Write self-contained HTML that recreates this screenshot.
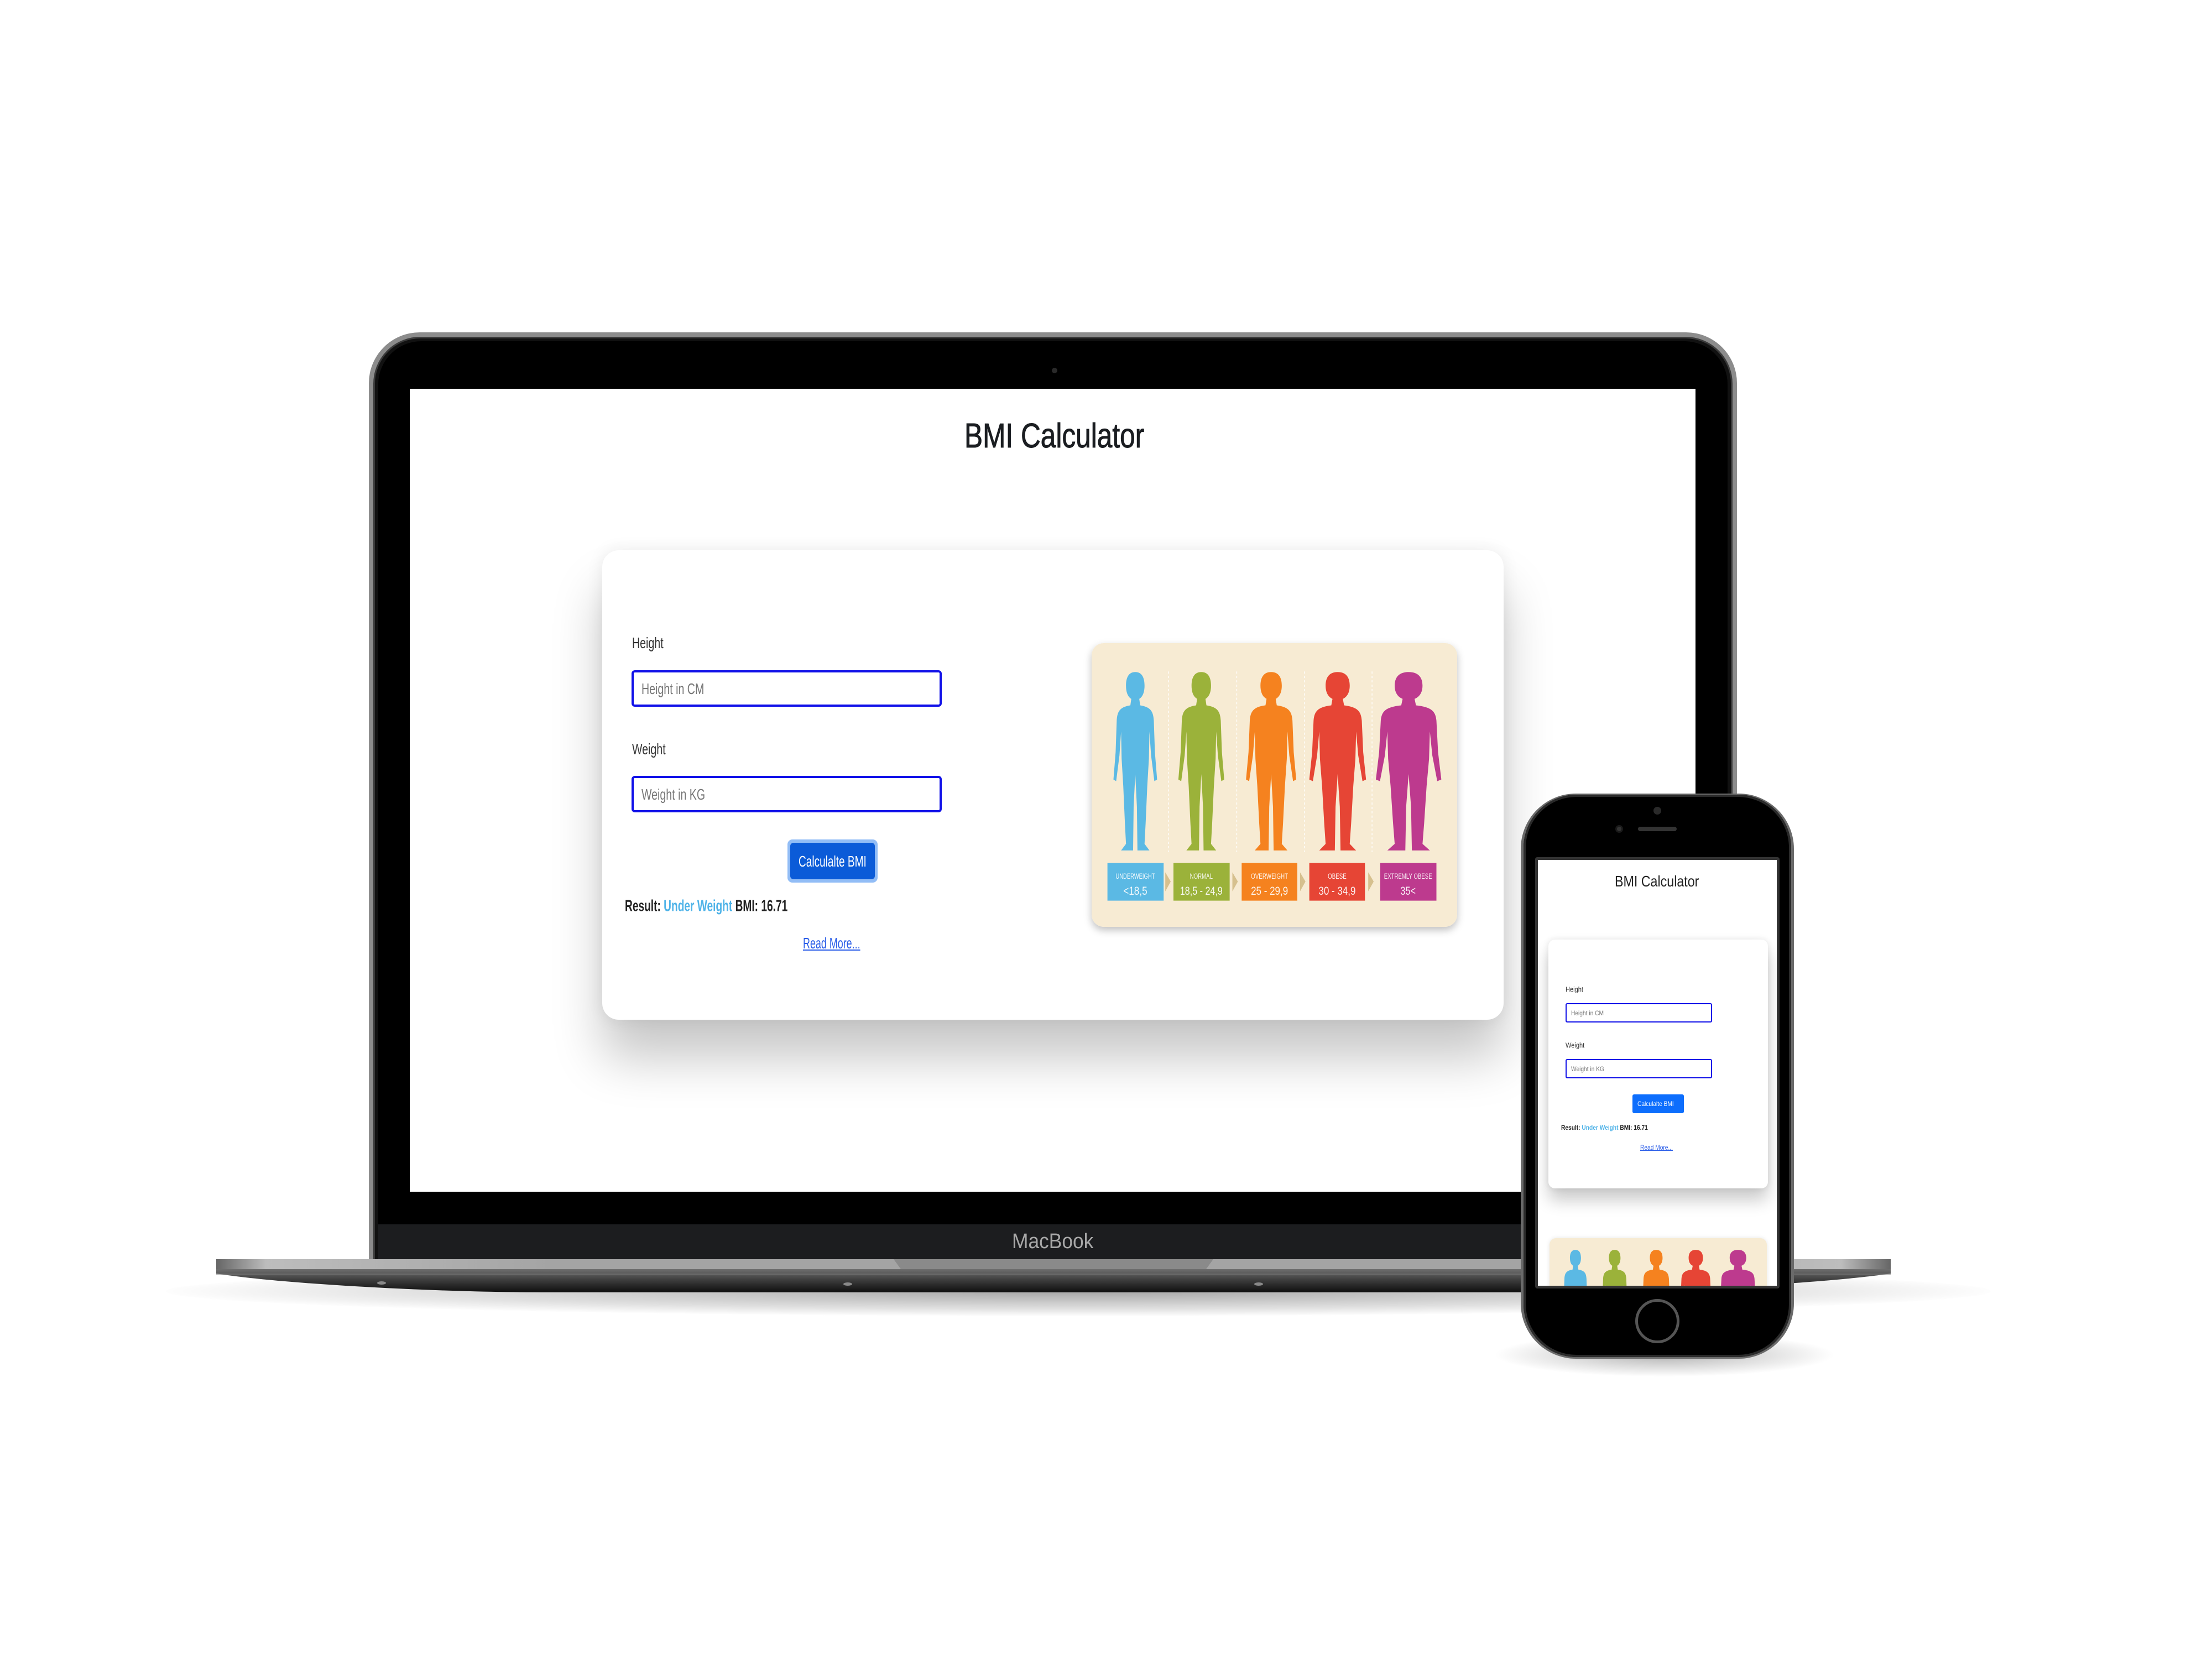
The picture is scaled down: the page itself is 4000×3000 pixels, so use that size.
<!DOCTYPE html>
<html><head><meta charset="utf-8"><style>
*{margin:0;padding:0;box-sizing:border-box}
body{width:4000px;height:3000px;background:#fff;position:relative;overflow:hidden;font-family:"Liberation Sans",sans-serif}
.a{position:absolute}
.t{position:absolute;white-space:nowrap;transform-origin:0 50%;line-height:1}
</style></head><body>

<div class="a" style="left:300px;top:2290px;width:3300px;height:90px;border-radius:50%;background:radial-gradient(ellipse at center,rgba(0,0,0,.35) 0%,rgba(0,0,0,.12) 50%,rgba(0,0,0,0) 72%)"></div>

<div class="a" style="left:667px;top:601px;width:2474px;height:1700px;border-radius:92px 92px 0 0;background:#8c8c8c"></div>
<div class="a" style="left:675px;top:609px;width:2458px;height:1700px;border-radius:85px 85px 0 0;background:#111;border:3px solid #3a3a3a"></div>
<div class="a" style="left:684px;top:617px;width:2440px;height:1680px;border-radius:78px 78px 0 0;background:#000"></div>
<div class="a" style="left:684px;top:2214px;width:2440px;height:64px;background:#1c1d1f"></div>
<div class="a" style="left:1902px;top:665px;width:10px;height:10px;border-radius:50%;background:#2a2a2a"></div>
<div class="t" style="left:1830px;top:2245px;font-size:38px;color:#a8a8a8;transform:translateY(-50%) scaleX(.93)">MacBook</div>

<div class="a" style="left:741px;top:703px;width:2325px;height:1452px;background:#fff;overflow:hidden">
  <div class="t" style="left:1003px;top:86px;font-size:62px;color:#1a1d21;-webkit-text-stroke:1px #1a1d21;transform:translateY(-50%) scaleX(.8)">BMI Calculator</div>
  <div class="a" style="left:348px;top:292px;width:1630px;height:849px;background:#fff;border-radius:30px;box-shadow:0 70px 90px rgba(0,0,0,.22),0 0 30px rgba(0,0,0,.08)"></div>
</div>

<div class="t" style="left:1143px;top:1163px;font-size:28px;color:#333;transform:translateY(-50%) scaleX(.7)">Height</div>
<div class="a" style="left:1142px;top:1212px;width:561px;height:66px;border:4px solid #1010e8;border-radius:6px"></div>
<div class="t" style="left:1160px;top:1246px;font-size:28px;color:#777;transform:translateY(-50%) scaleX(.7)">Height in CM</div>
<div class="t" style="left:1143px;top:1355px;font-size:28px;color:#333;transform:translateY(-50%) scaleX(.7)">Weight</div>
<div class="a" style="left:1142px;top:1403px;width:561px;height:66px;border:4px solid #1010e8;border-radius:6px"></div>
<div class="t" style="left:1160px;top:1437px;font-size:28px;color:#777;transform:translateY(-50%) scaleX(.7)">Weight in KG</div>
<div class="a" style="left:1424px;top:1518px;width:163px;height:78px;border-radius:9px;background:#92bdf6"></div>
<div class="a" style="left:1429px;top:1524px;width:153px;height:66px;border-radius:6px;background:#0b5bd8"></div>
<div class="t" style="left:1444px;top:1558px;font-size:28px;color:#fff;transform:translateY(-50%) scaleX(.68)">Calculalte BMI</div>
<div class="t" style="left:1130px;top:1639px;font-size:29px;font-weight:bold;color:#222;transform:translateY(-50%) scaleX(.66)">Result: <span style="color:#4fb3e8">Under Weight</span> BMI: 16.71</div>
<div class="t" style="left:1452px;top:1706px;font-size:28px;color:#2a5de8;text-decoration:underline;transform:translateY(-50%) scaleX(.64)">Read More...</div>

<div class="a" style="left:1974px;top:1163px;width:661px;height:513px;border-radius:22px;overflow:hidden;box-shadow:0 6px 14px rgba(0,0,0,.25)">
<svg width="661" height="513" viewBox="0 0 670 520" preserveAspectRatio="none">
<defs>
<path id="fig" d="M-7 100 L7 100 L9 114 C28 117 33 125 34 142 L36 200 L40 250 L35 253 L29 206 L26 162 L25 212 L22 262 L19 330 L17 368 L26 380 L4 380 L3 300 L0 240 L-3 300 L-4 380 L-26 380 L-17 368 L-19 330 L-22 262 L-25 212 L-26 162 L-29 206 L-35 253 L-40 250 L-36 200 L-34 142 C-33 125 -28 117 -9 114 Z M0 53 C12 53 17 63 17 78 C17 95 10 104 0 104 C-10 104 -17 95 -17 78 C-17 63 -12 53 0 53 Z"/>
</defs>
<rect width="670" height="520" fill="#f7ebd3"/>
<g stroke="#fff" stroke-width="1.5" stroke-dasharray="4 4" opacity=".9">
<line x1="141" y1="52" x2="141" y2="383"/><line x1="266" y1="52" x2="266" y2="383"/><line x1="390" y1="52" x2="390" y2="383"/><line x1="514" y1="52" x2="514" y2="383"/></g>
<use href="#fig" transform="translate(80,0) scale(1.0,1)" fill="#5bb9e4"/>
<use href="#fig" transform="translate(201,0) scale(1.05,1)" fill="#9bb23a"/>
<use href="#fig" transform="translate(329,0) scale(1.15,1)" fill="#f5821f"/>
<use href="#fig" transform="translate(451,0) scale(1.3,1)" fill="#e64535"/>
<use href="#fig" transform="translate(581,0) scale(1.5,1)" fill="#bd3a8e"/>
<g fill="#d6c08e"><path d="M135 420 L145 437 L135 455Z"/><path d="M258 420 L268 437 L258 455Z"/><path d="M382 420 L392 437 L382 455Z"/><path d="M507 420 L517 437 L507 455Z"/></g>
<rect x="29" y="403" width="103" height="69" fill="#5bb9e4"/>
<rect x="150" y="403" width="103" height="69" fill="#9bb23a"/>
<rect x="275" y="403" width="102" height="69" fill="#f5821f"/>
<rect x="399" y="403" width="102" height="69" fill="#e64535"/>
<rect x="529" y="403" width="103" height="69" fill="#bd3a8e"/>
<g fill="#fff" font-family="Liberation Sans" text-anchor="middle" opacity=".92">
<text x="80" y="432" font-size="14" textLength="72" lengthAdjust="spacingAndGlyphs">UNDERWEIGHT</text><text x="80" y="461" font-size="22" textLength="44" lengthAdjust="spacingAndGlyphs">&lt;18,5</text>
<text x="201" y="432" font-size="14" textLength="42" lengthAdjust="spacingAndGlyphs">NORMAL</text><text x="201" y="461" font-size="22" textLength="78" lengthAdjust="spacingAndGlyphs">18,5 - 24,9</text>
<text x="326" y="432" font-size="14" textLength="68" lengthAdjust="spacingAndGlyphs">OVERWEIGHT</text><text x="326" y="461" font-size="22" textLength="68" lengthAdjust="spacingAndGlyphs">25 - 29,9</text>
<text x="450" y="432" font-size="14" textLength="34" lengthAdjust="spacingAndGlyphs">OBESE</text><text x="450" y="461" font-size="22" textLength="68" lengthAdjust="spacingAndGlyphs">30 - 34,9</text>
<text x="580" y="432" font-size="14" textLength="88" lengthAdjust="spacingAndGlyphs">EXTREMLY OBESE</text><text x="580" y="461" font-size="22" textLength="28" lengthAdjust="spacingAndGlyphs">35&lt;</text>
</g></svg></div>

<svg class="a" style="left:391px;top:2277px" width="3028" height="62" viewBox="0 0 3028 62">
<defs>
<linearGradient id="bt" x1="0" x2="1"><stop offset="0" stop-color="#666"/><stop offset=".03" stop-color="#bdbdbd"/><stop offset=".2" stop-color="#a4a4a4"/><stop offset=".8" stop-color="#a4a4a4"/><stop offset=".97" stop-color="#bdbdbd"/><stop offset="1" stop-color="#666"/></linearGradient>
<linearGradient id="bb" x1="0" y1="0" x2="0" y2="1"><stop offset="0" stop-color="#6e6e6e"/><stop offset=".5" stop-color="#3a3a3a"/><stop offset="1" stop-color="#0e0e0e"/></linearGradient>
</defs>
<rect x="0" y="0" width="3028" height="18" fill="url(#bt)"/>
<path d="M0 18 L3028 18 L3028 26 C2900 45 2600 60 2400 60 L600 60 C400 60 120 45 0 26 Z" fill="url(#bb)"/>
<rect x="0" y="26" width="3028" height="2" fill="#7a7a7a" opacity=".6"/>
<path d="M1225 0 L1803 0 L1790 18 L1238 18 Z" fill="#8a8a8a"/>
<ellipse cx="299" cy="43" rx="8" ry="3" fill="#888"/><ellipse cx="1142" cy="45" rx="8" ry="3" fill="#888"/><ellipse cx="1885" cy="45" rx="8" ry="3" fill="#888"/>
</svg>

<div class="a" style="left:2700px;top:2410px;width:620px;height:80px;border-radius:50%;background:radial-gradient(ellipse at center,rgba(0,0,0,.3),rgba(0,0,0,0) 70%)"></div>
<div class="a" style="left:2750px;top:1435px;width:494px;height:1022px;border-radius:100px;background:#6a6a6a"></div>
<div class="a" style="left:2755px;top:1437px;width:484px;height:1017px;border-radius:96px;background:#000;box-shadow:inset 0 0 0 4px #2a2a2a"></div>
<div class="a" style="left:2990px;top:1459px;width:14px;height:14px;border-radius:50%;background:#2a2a2a"></div>
<div class="a" style="left:2921px;top:1492px;width:14px;height:14px;border-radius:50%;background:#333;border:3px solid #1a1a1a"></div>
<div class="a" style="left:2962px;top:1495px;width:70px;height:8px;border-radius:4px;background:#333"></div>
<div class="a" style="left:2957px;top:2349px;width:80px;height:80px;border-radius:50%;border:5px solid #555"></div>
<div class="a" style="left:2776px;top:1550px;width:442px;height:780px;background:#333;border-radius:4px"></div>
<div class="a" style="left:2781px;top:1555px;width:432px;height:770px;background:#fff;overflow:hidden">
  <div class="t" style="left:139px;top:39px;font-size:28px;color:#222;transform:translateY(-50%) scaleX(.83)">BMI Calculator</div>
  <div class="a" style="left:19px;top:144px;width:397px;height:450px;background:#fff;border-radius:12px;box-shadow:0 22px 30px rgba(0,0,0,.2),0 0 12px rgba(0,0,0,.1)"></div>
  <div class="a" style="left:21px;top:684px;width:393px;height:140px;background:#f7ebd3;border-radius:12px;overflow:hidden;box-shadow:0 0 8px rgba(0,0,0,.1)">
    <svg width="393" height="305" viewBox="0 0 670 520" preserveAspectRatio="none" style="position:absolute;left:0;top:-10px">
    <use href="#fig" transform="translate(80,0) scale(1.0,1)" fill="#5bb9e4"/>
    <use href="#fig" transform="translate(201,0) scale(1.05,1)" fill="#9bb23a"/>
    <use href="#fig" transform="translate(329,0) scale(1.15,1)" fill="#f5821f"/>
    <use href="#fig" transform="translate(451,0) scale(1.3,1)" fill="#e64535"/>
    <use href="#fig" transform="translate(581,0) scale(1.5,1)" fill="#bd3a8e"/>
    </svg>
  </div>
</div>
<div class="t" style="left:2831px;top:1789px;font-size:13px;color:#333;transform:translateY(-50%) scaleX(.85)">Height</div>
<div class="a" style="left:2831px;top:1814px;width:265px;height:35px;border:2px solid #1010e8;border-radius:3px"></div>
<div class="t" style="left:2841px;top:1832px;font-size:12px;color:#777;transform:translateY(-50%) scaleX(.85)">Height in CM</div>
<div class="t" style="left:2831px;top:1890px;font-size:13px;color:#333;transform:translateY(-50%) scaleX(.85)">Weight</div>
<div class="a" style="left:2831px;top:1915px;width:265px;height:35px;border:2px solid #1010e8;border-radius:3px"></div>
<div class="t" style="left:2841px;top:1933px;font-size:12px;color:#777;transform:translateY(-50%) scaleX(.85)">Weight in KG</div>
<div class="a" style="left:2952px;top:1979px;width:93px;height:34px;border-radius:3px;background:#0d6efd"></div>
<div class="t" style="left:2961px;top:1996px;font-size:12px;color:#fff;transform:translateY(-50%) scaleX(.85)">Calculalte BMI</div>
<div class="t" style="left:2823px;top:2039px;font-size:12px;font-weight:bold;color:#222;transform:translateY(-50%) scaleX(.85)">Result: <span style="color:#4fb3e8">Under Weight</span> BMI: 16.71</div>
<div class="t" style="left:2966px;top:2075px;font-size:12px;color:#2a5de8;text-decoration:underline;transform:translateY(-50%) scaleX(.85)">Read More...</div>

</body></html>
